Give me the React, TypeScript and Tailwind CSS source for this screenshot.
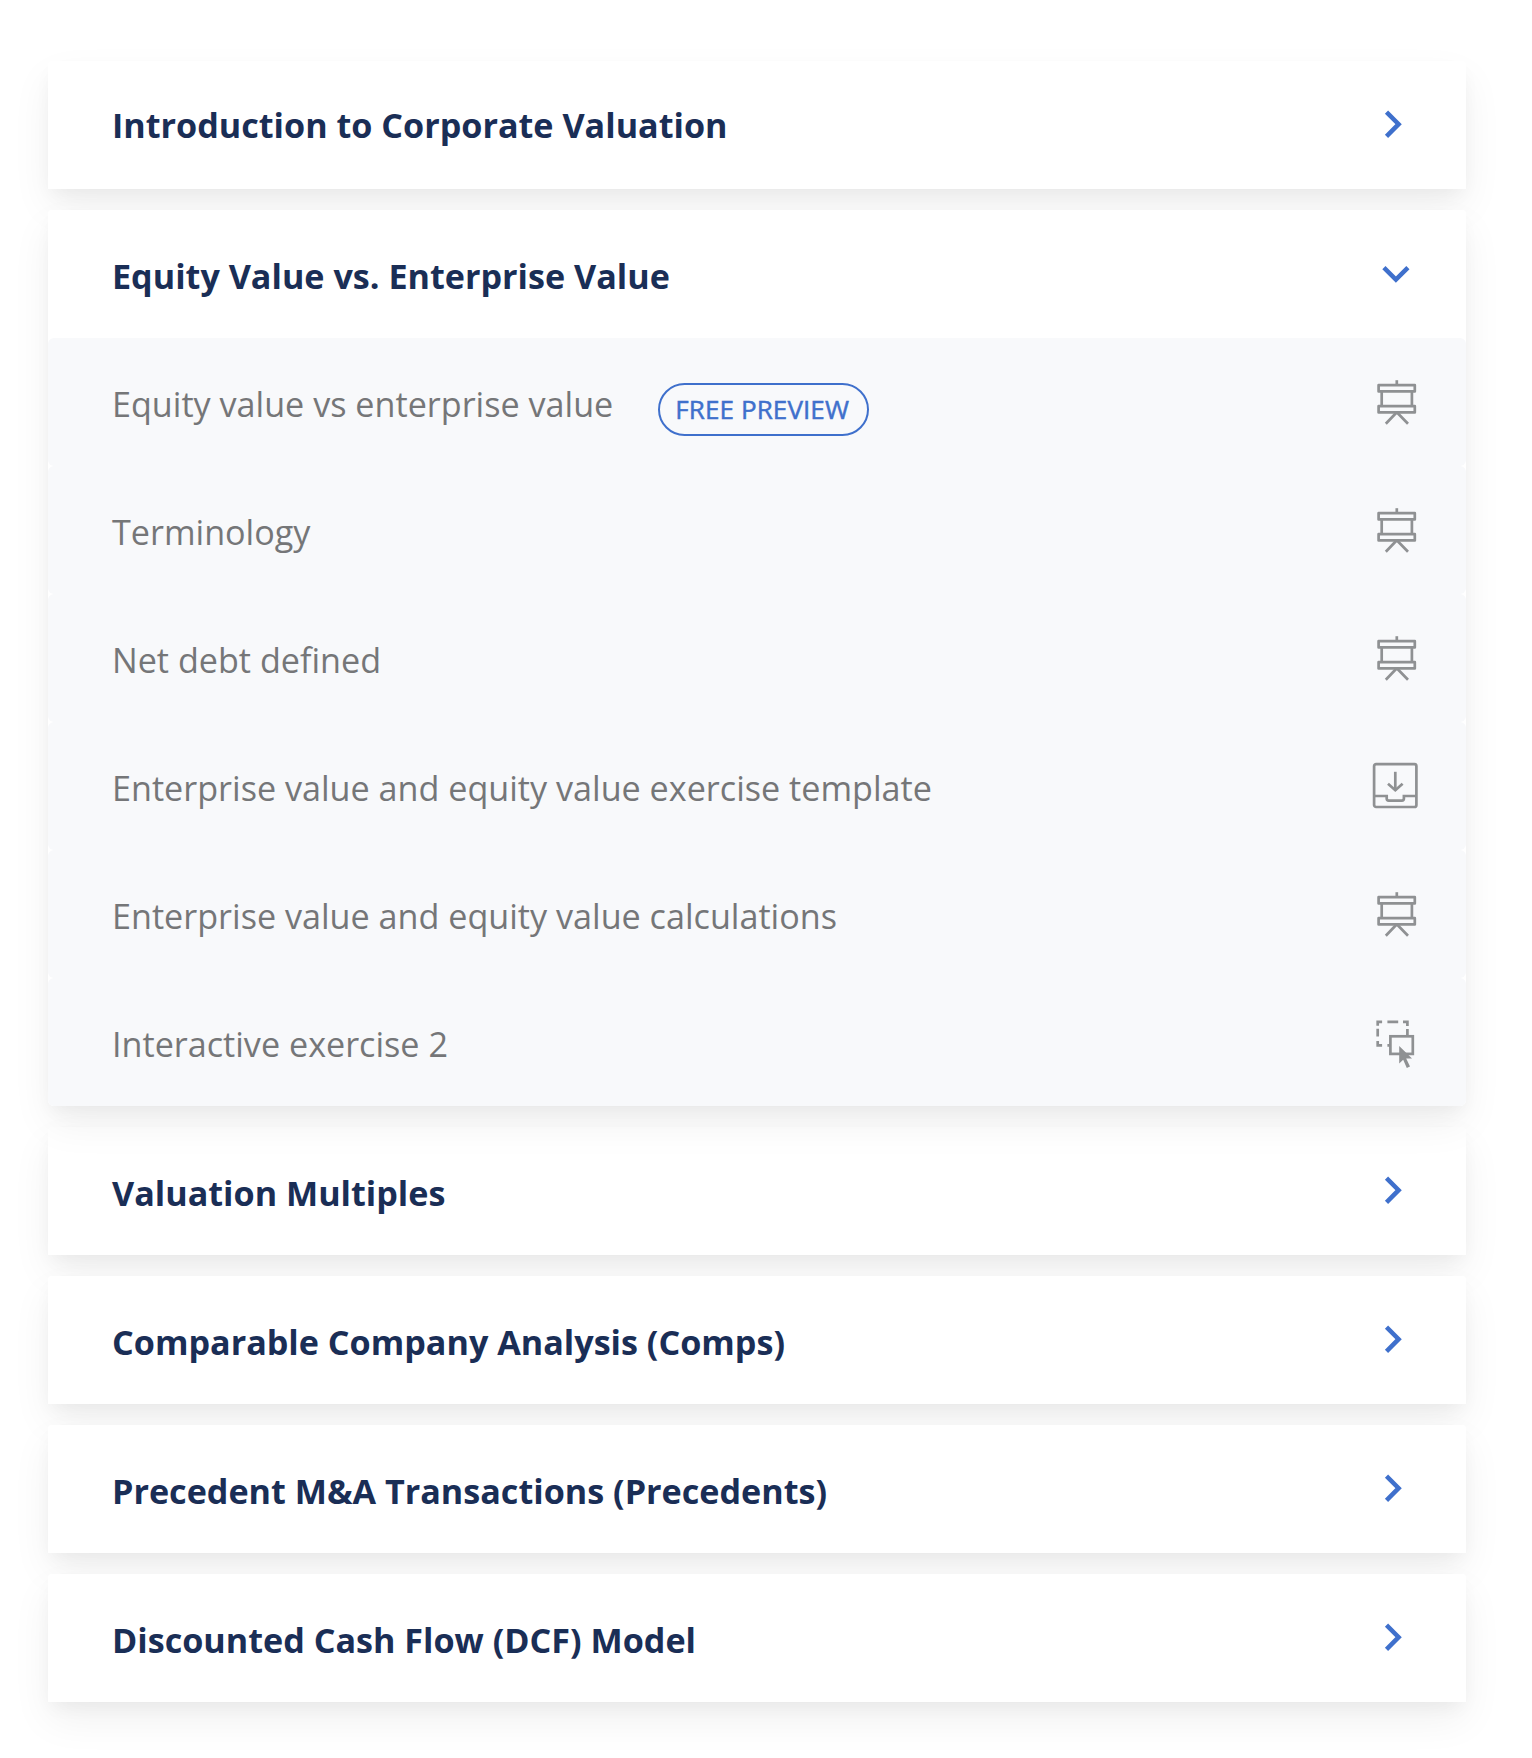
import type { ReactNode } from "react";

const Board = () => (
  <svg width="48" height="52" viewBox="0 0 48 52" fill="none" stroke="#8f9193" strokeWidth="2.7" strokeLinejoin="round">
    <path d="M24.8 2.2v4" />
    <path d="M6.6 7.2h36.2v6.2H6.6zM6.6 28.2h36.2v6.2H6.6z" />
    <path d="M9.7 13.4v14.8M39.9 13.4v14.8" />
    <path d="M24.8 34.2 13.8 45.8M24.8 34.2l11.2 11.6" />
  </svg>
);

const Download = () => (
  <svg width="48" height="52" viewBox="0 0 48 52" fill="none" stroke="#8f9193" strokeWidth="2.7">
    <rect x="2.1" y="2.2" width="42.3" height="42.8" rx="2" />
    <path d="M2.3 34h12.4v2.6a2 2 0 0 0 2 2h13.2a2 2 0 0 0 2-2V34h12.5" />
    <path d="M23.3 9.8v18.8" />
    <path d="m16 21.7 7.3 6.6 7.3-6.6" />
  </svg>
);

const Interactive = () => (
  <svg width="48" height="52" viewBox="0 0 48 52" fill="none" stroke="#8f9193" strokeWidth="2.7">
    <path d="M5.7 7.7V3.9h4.4M15.4 3.9h10.8M31 3.9h4.4v4.2M5.7 10.8v7.8M5.7 22.9v4.4h4.4M15.4 27.3h3.2M35.4 11v6" />
    <rect x="18.4" y="18.3" width="22.4" height="17.6" />
    <path d="M27.2 28v17.4l4-3.6 3.6 8.2 3.2-1.4-3.8-8.2h5.8z" fill="#8f9193" stroke="none" />
  </svg>
);

const Chevron = ({ open }: { open?: boolean }) => (
  <svg width="48" height="32" viewBox="0 0 48 32" fill="none" stroke="#3f70cc" strokeWidth="4.5">
    {open ? <path d="m11.9 9.6 12 12 12-12" /> : <path d="m14.5 3.1 12.1 12.1-12.1 12.1" />}
  </svg>
);

const Header = ({ title, open }: { title: string; open?: boolean }) => (
  <button className="flex h-32 w-full items-center justify-between rounded-t bg-white pr-[46px] pl-[63.6px] text-left">
    <span className="pt-[4px] text-[34.15px] leading-[46px] font-bold text-[#1a2e56] group-first:pt-0">{title}</span>
    <Chevron open={open} />
  </button>
);

const Section = ({ title, children }: { title: string; children?: ReactNode }) => (
  <section
    className={`group rounded-t bg-white shadow-[0_18px_40px_rgba(0,0,0,0.06),0_8px_18px_-4px_rgba(0,0,0,0.05)] ${
      children ? "relative z-10 rounded-b-md" : ""
    }`}
  >
    <Header title={title} open={!!children} />
    {children}
  </section>
);

const lessons = [
  { name: "Equity value vs enterprise value", icon: <Board />, preview: true },
  { name: "Terminology", icon: <Board /> },
  { name: "Net debt defined", icon: <Board /> },
  { name: "Enterprise value and equity value exercise template", icon: <Download /> },
  { name: "Enterprise value and equity value calculations", icon: <Board /> },
  { name: "Interactive exercise 2", icon: <Interactive /> },
];

export default function App() {
  return (
    <main className="flex h-[1758px] w-[1532px] flex-col gap-[21.2px] overflow-hidden bg-white px-[48.4px] pt-[61px] pr-[66.5px] font-['Open_Sans',sans-serif]">
      <Section title="Introduction to Corporate Valuation" />
      <Section title="Equity Value vs. Enterprise Value">
        <ul className="rounded-b-md bg-white">
          {lessons.map((l) => (
            <li key={l.name} className="flex h-[127.9px] items-start rounded-md bg-[#f8f9fb] pr-[46px] pl-[63.6px]">
              <span className="pt-[43px] text-[34.15px] leading-[46px] text-[#757678]">{l.name}</span>
              {l.preview && (
                <span className="mt-[45px] ml-[44.4px] flex h-[53px] w-[211px] items-center justify-center rounded-full border-2 border-[#3f70cc] pr-[2px] pb-[2px] text-[26px] leading-none font-medium tracking-[0.1px] text-[#3f70cc] [-webkit-text-stroke:0.5px_#3f70cc]">
                  FREE PREVIEW
                </span>
              )}
              <span className="mt-[40px] ml-auto">{l.icon}</span>
            </li>
          ))}
        </ul>
      </Section>
      <Section title="Valuation Multiples" />
      <Section title="Comparable Company Analysis (Comps)" />
      <Section title="Precedent M&A Transactions (Precedents)" />
      <Section title="Discounted Cash Flow (DCF) Model" />
    </main>
  );
}
